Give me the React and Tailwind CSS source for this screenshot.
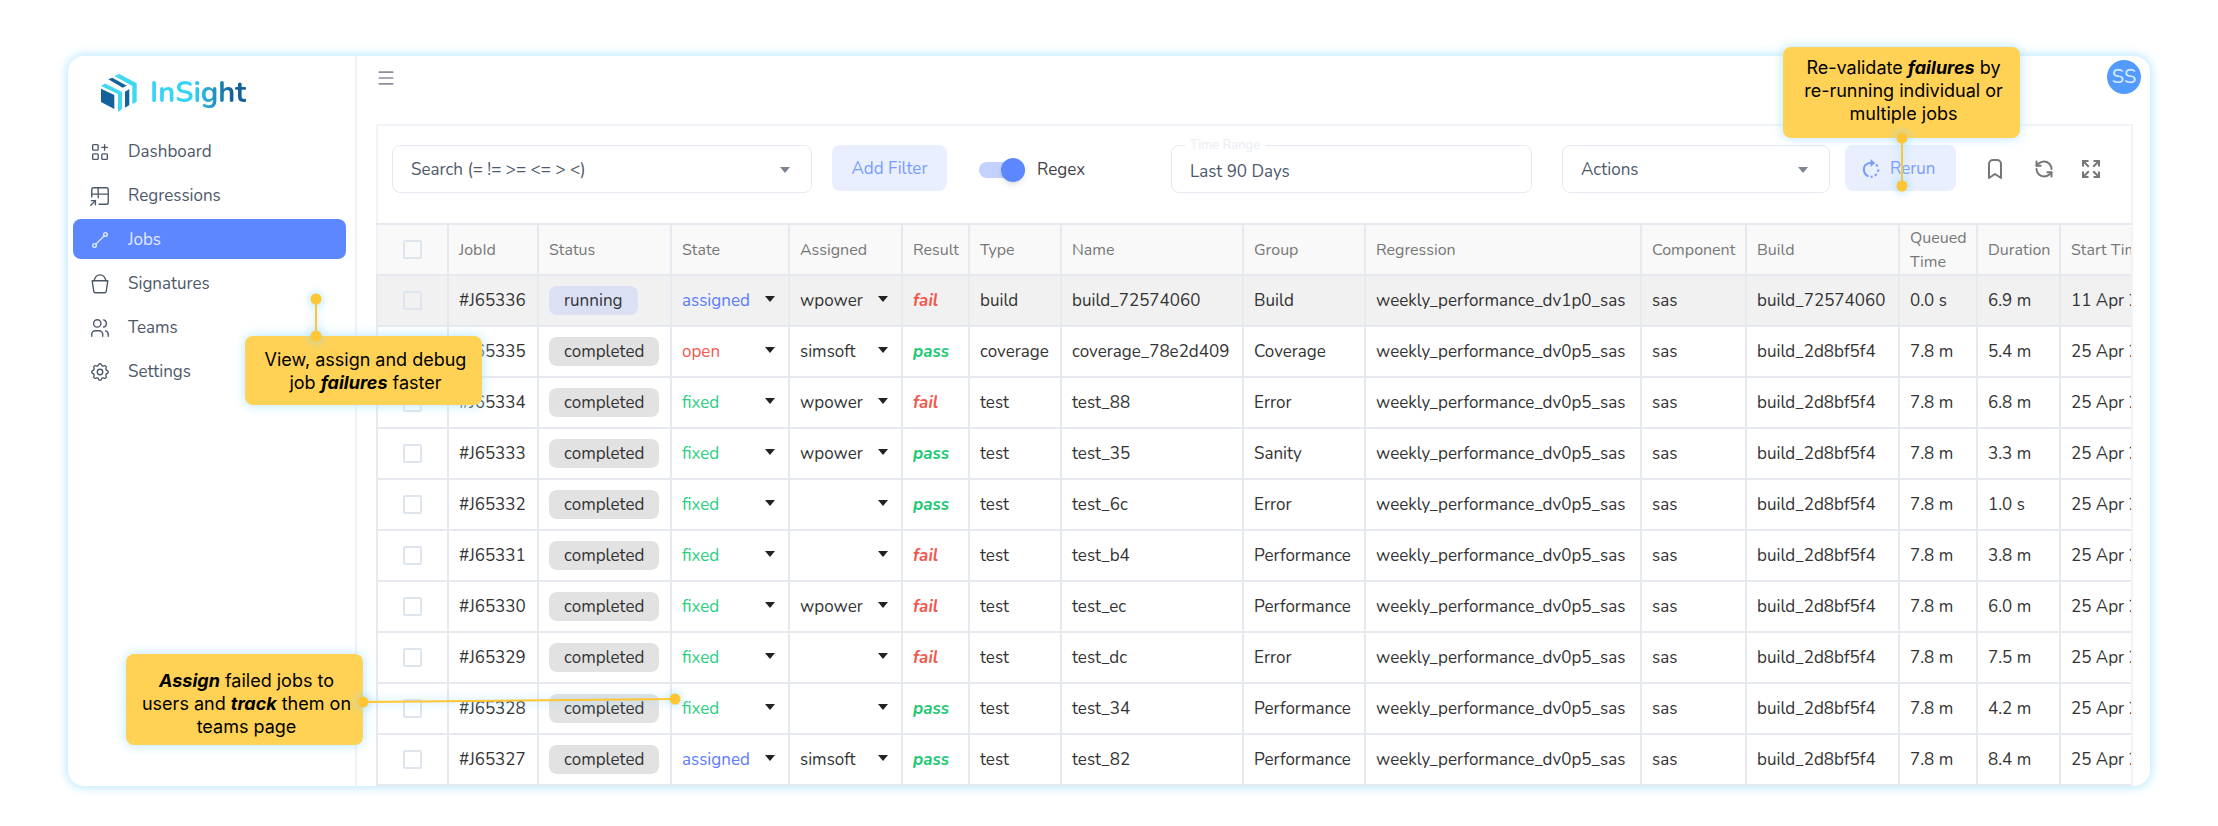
import { useState } from 'react';
import { Menu } from 'lucide-react';
import { TbApps, TbTableShortcut, TbLine, TbUsers, TbSettings, TbBookmark } from 'react-icons/tb';
import { LuRefreshCcw } from 'react-icons/lu';

const NAV = [
  { label: 'Dashboard', Icon: TbApps },
  { label: 'Regressions', Icon: TbTableShortcut },
  { label: 'Jobs', Icon: TbLine, active: true },
  { label: 'Signatures', Icon: BucketIcon },
  { label: 'Teams', Icon: TbUsers },
  { label: 'Settings', Icon: TbSettings },
];

const COLUMNS = [
  { title: 'JobId', width: 'w-[90px]' },
  { title: 'Status', width: 'w-[133px]' },
  { title: 'State', width: 'w-[118px]' },
  { title: 'Assigned', width: 'w-[113px]' },
  { title: 'Result', width: 'w-[67px]' },
  { title: 'Type', width: 'w-[92px]' },
  { title: 'Name', width: 'w-[182px]' },
  { title: 'Group', width: 'w-[122px]' },
  { title: 'Regression', width: 'w-[276px]' },
  { title: 'Component', width: 'w-[105px]' },
  { title: 'Build', width: 'w-[153px]' },
  { title: 'Queued Time', width: 'w-[78px]' },
  { title: 'Duration', width: 'w-[83px]' },
  { title: 'Start Time', width: 'w-[180px]' },
];

const JOBS = [
  ['#J65336', 'running', 'assigned', 'wpower', 'fail', 'build', 'build_72574060', 'Build', 'weekly_performance_dv1p0_sas', 'sas', 'build_72574060', '0.0 s', '6.9 m', '11 Apr 2023'],
  ['#J65335', 'completed', 'open', 'simsoft', 'pass', 'coverage', 'coverage_78e2d409', 'Coverage', 'weekly_performance_dv0p5_sas', 'sas', 'build_2d8bf5f4', '7.8 m', '5.4 m', '25 Apr 2023'],
  ['#J65334', 'completed', 'fixed', 'wpower', 'fail', 'test', 'test_88', 'Error', 'weekly_performance_dv0p5_sas', 'sas', 'build_2d8bf5f4', '7.8 m', '6.8 m', '25 Apr 2023'],
  ['#J65333', 'completed', 'fixed', 'wpower', 'pass', 'test', 'test_35', 'Sanity', 'weekly_performance_dv0p5_sas', 'sas', 'build_2d8bf5f4', '7.8 m', '3.3 m', '25 Apr 2023'],
  ['#J65332', 'completed', 'fixed', '', 'pass', 'test', 'test_6c', 'Error', 'weekly_performance_dv0p5_sas', 'sas', 'build_2d8bf5f4', '7.8 m', '1.0 s', '25 Apr 2023'],
  ['#J65331', 'completed', 'fixed', '', 'fail', 'test', 'test_b4', 'Performance', 'weekly_performance_dv0p5_sas', 'sas', 'build_2d8bf5f4', '7.8 m', '3.8 m', '25 Apr 2023'],
  ['#J65330', 'completed', 'fixed', 'wpower', 'fail', 'test', 'test_ec', 'Performance', 'weekly_performance_dv0p5_sas', 'sas', 'build_2d8bf5f4', '7.8 m', '6.0 m', '25 Apr 2023'],
  ['#J65329', 'completed', 'fixed', '', 'fail', 'test', 'test_dc', 'Error', 'weekly_performance_dv0p5_sas', 'sas', 'build_2d8bf5f4', '7.8 m', '7.5 m', '25 Apr 2023'],
  ['#J65328', 'completed', 'fixed', '', 'pass', 'test', 'test_34', 'Performance', 'weekly_performance_dv0p5_sas', 'sas', 'build_2d8bf5f4', '7.8 m', '4.2 m', '25 Apr 2023'],
  ['#J65327', 'completed', 'assigned', 'simsoft', 'pass', 'test', 'test_82', 'Performance', 'weekly_performance_dv0p5_sas', 'sas', 'build_2d8bf5f4', '7.8 m', '8.4 m', '25 Apr 2023'],
];

const STATE_COLORS = {
  assigned: 'text-[#5b7cff]',
  open: 'text-[#f4574d]',
  fixed: 'text-[#2bd07f]',
};

function BucketIcon({ className }) {
  return (
    <svg
      viewBox="0 0 24 24"
      fill="none"
      stroke="currentColor"
      strokeWidth="1.5"
      strokeLinecap="round"
      strokeLinejoin="round"
      className={className}
      aria-hidden="true"
    >
      <path d="M3.500 8.500H20.500L18.700 20.500A1.500 1.500 0 0 1 17.200 21.500H6.800A1.500 1.500 0 0 1 5.300 20.500Z" />
      <path d="M5.500 8.500C6.500 4.500 9 2 12 2S17.500 4.500 18.500 8.500" />
    </svg>
  );
}

function RerunIcon() {
  return (
    <svg width="20" height="20" viewBox="0 0 24 24" fill="none" stroke="currentColor" strokeWidth="2.4" aria-hidden="true">
      <path d="M9 20.800A8.800 8.800 0 0 1 5 7.500Q8 4.500 13 4.500" />
      <path d="M11.500 0L17 4.800L11.500 9.500Z" fill="currentColor" stroke="none" />
      <path d="M18 6.500L20 9M21 12.500L20.500 15.500M19 18L16.500 20M14 21.200H11.500" />
    </svg>
  );
}

function ExpandIcon() {
  return (
    <svg width="20" height="20" viewBox="0 0 20 20" fill="none" stroke="currentColor" strokeWidth="2" aria-hidden="true">
      <path d="M2 7.500V2H7.500M12.500 2H18V7.500M18 12.500V18H12.500M7.500 18H2V12.500" />
      <path d="M2 2L7.800 7.800M18 2L12.200 7.800M18 18L12.200 12.200M2 18L7.800 12.200" />
    </svg>
  );
}

function Caret({ className }) {
  return (
    <svg width="10" height="6" viewBox="0 0 10 6" className={className} aria-hidden="true">
      <path d="M0 0H10L5 6Z" fill="currentColor" />
    </svg>
  );
}

function Logo() {
  return (
    <div className="flex items-center gap-3 pl-8">
      <svg width="38" height="40" viewBox="0 0 38 40" aria-hidden="true">
        <path d="M1 15.700L14.300 22V36L1 29Z" fill="#14629b" />
        <path d="M1 13L5 10.500L22 19V36L18 39V21Z" fill="#3fd8ee" />
        <path d="M8.300 6.300L12.300 4.700L26.700 12.700L22.700 14.700Z" fill="#14629b" />
        <path d="M25 18.700L29.300 16V32L25 34.700Z" fill="#14629b" />
        <path d="M14.300 3L19.300 1L36.700 10.300V28.700L32.300 31V13Z" fill="#3fd8ee" />
      </svg>
      <span className="bg-linear-to-r from-[#35d3f5] from-45% to-[#14629b] to-85% bg-clip-text text-[29px] leading-9 font-bold text-transparent">
        InSight
      </span>
    </div>
  );
}

function Sidebar() {
  return (
    <aside className="w-[289px] shrink-0 border-r-2 border-[#eff2f8] pt-[17px]">
      <Logo />
      <nav className="mt-[18px] flex flex-col gap-1 pr-[9px] pl-[5px]">
        {NAV.map(({ label, Icon, active }) => (
          <a
            key={label}
            href="#"
            className={`flex h-10 items-center gap-[17px] rounded-lg pt-px pl-4 ${
              active ? 'bg-[#5d87ff] text-[#e3eaff]' : 'text-[#4d5869]'
            }`}
          >
            <Icon className="size-[22px]" strokeWidth={1.5} />
            {label}
          </a>
        ))}
      </nav>
    </aside>
  );
}

function Toolbar() {
  const [regex, setRegex] = useState(true);
  return (
    <div className="flex items-start border-x-2 border-t-2 border-[#f1f3f9] px-[14px] pt-[19px] pb-[30px] text-[#4d5869]">
      <div className="relative w-[420px]">
        <select aria-label="Search" className="h-12 w-full appearance-none rounded-lg border border-[#e5eaf2] bg-white px-[18px] pt-px">
          <option>Search (= != &gt;= &lt;= &gt; &lt;)</option>
        </select>
        <Caret className="pointer-events-none absolute top-[22px] right-[22px] text-[#7c8493]" />
      </div>
      <button className="ml-5 h-[46px] w-[115px] rounded-lg bg-[#e9efff] pt-px text-[#7a9bff]">Add Filter</button>
      <label className="ml-8 flex h-12 items-center gap-3 pt-px text-[#3f4247]">
        <span className="relative flex h-4 w-[46px] items-center rounded-full bg-[#c3d1ff]">
          <input
            type="checkbox"
            role="switch"
            checked={regex}
            onChange={() => setRegex(!regex)}
            className="absolute inset-0 appearance-none"
          />
          <span className={`size-6 rounded-full bg-[#5d87ff] shadow-md ${regex ? 'ml-auto' : ''}`} />
        </span>
        Regex
      </label>
      <div className="relative ml-auto w-[361px]">
        <input
          id="range"
          defaultValue="Last 90 Days"
          className="h-12 w-full rounded-lg border border-[#e5eaf2] px-[18px] pt-1"
        />
        <label htmlFor="range" className="absolute -top-[10px] left-[14px] bg-white px-[5px] text-[13px] leading-5 text-[#e9edf4]">
          Time Range
        </label>
      </div>
      <div className="relative ml-[30px] w-[268px]">
        <select aria-label="Actions" className="h-12 w-full appearance-none rounded-lg border border-[#e5eaf2] bg-white px-[18px] pt-px">
          <option>Actions</option>
        </select>
        <Caret className="pointer-events-none absolute top-[22px] right-[22px] text-[#7c8493]" />
      </div>
      <button className="ml-[15px] flex h-[46px] w-[111px] items-center gap-[9px] rounded-lg bg-[#e9efff] pt-px pl-4 text-[#7a9bff]">
        <RerunIcon />
        Rerun
      </button>
      <div className="ml-[27px] flex h-12 items-center gap-[27px] pr-4 text-[#777]">
        <button aria-label="Bookmark"><TbBookmark className="size-6" /></button>
        <button aria-label="Refresh"><LuRefreshCcw className="size-5" strokeWidth={2.4} /></button>
        <button aria-label="Full screen"><ExpandIcon /></button>
      </div>
    </div>
  );
}

function RowCheckbox({ label }) {
  return (
    <input
      type="checkbox"
      aria-label={label}
      className="block size-[19px] appearance-none rounded-xs border-2 border-[#dfe5ef]"
    />
  );
}

function CellValue({ column, value }) {
  switch (column) {
    case 'Status':
      return (
        <span
          className={`inline-block rounded-lg px-[15px] py-[3px] leading-[23px] ${
            value === 'running' ? 'bg-[#dce0f5]' : 'bg-[#e2e2e2]'
          }`}
        >
          {value}
        </span>
      );
    case 'State':
    case 'Assigned':
      return (
        <div className={`flex items-center justify-between pr-[13px] ${STATE_COLORS[value] || ''}`}>
          <span>{value}</span>
          <Caret className="mb-1 text-[#222]" />
        </div>
      );
    case 'Result':
      return (
        <span className={`font-bold italic ${value === 'fail' ? 'text-[#f4574d]' : 'text-[#20c873]'}`}>{value}</span>
      );
    default:
      return value;
  }
}

function JobsTable() {
  return (
    <div className="overflow-hidden border-r-2 border-[#f1f3f9]">
      <table className="w-[1863px] table-fixed border-collapse text-left whitespace-nowrap">
        <colgroup>
          <col className="w-[71px]" />
          {COLUMNS.map((c) => (
            <col key={c.title} className={c.width} />
          ))}
        </colgroup>
        <thead>
          <tr className="h-[51px] bg-[#f9f9f9] text-base text-[#777]">
            <th className="border-2 border-[#e6eaf0] border-l-[#eff2f8] pl-[25px]">
              <RowCheckbox label="Select all jobs" />
            </th>
            {COLUMNS.map((c) => (
              <th key={c.title} className="border-2 border-[#e6eaf0] pl-[10px] leading-6 font-normal whitespace-normal">
                {c.title}
              </th>
            ))}
          </tr>
        </thead>
        <tbody>
          {JOBS.map((job, i) => (
            <tr key={job[0]} className={`h-[51px] text-[#333] ${i === 0 ? 'bg-[#f1f1f1]' : ''}`}>
              <td className="border-2 border-[#e6eaf0] pl-[25px]">
                <RowCheckbox label={`Select ${job[0]}`} />
              </td>
              {COLUMNS.map((c, n) => (
                <td key={c.title} className="border-2 border-[#e6eaf0] pl-[10px]">
                  <CellValue column={c.title} value={job[n]} />
                </td>
              ))}
            </tr>
          ))}
        </tbody>
      </table>
    </div>
  );
}

function Callout({ className, children }) {
  return (
    <div
      className={`absolute flex w-[237px] justify-center rounded-lg bg-[#ffd255] text-center font-[Inter,sans-serif] text-lg leading-[23px] whitespace-nowrap text-black shadow-[0_0_12px_#b3e6ff] ${className}`}
    >
      <p>{children}</p>
    </div>
  );
}

function Connector({ className, x, y }) {
  const w = Math.abs(x) + 12;
  const h = Math.abs(y) + 12;
  const y1 = y < 0 ? h - 6 : 6;
  return (
    <svg
      width={w}
      height={h}
      className={`pointer-events-none absolute overflow-visible drop-shadow-[0_0_5px_#8fd8ff] ${className}`}
      aria-hidden="true"
    >
      <g fill="#ffc533" stroke="#ffc533" strokeWidth="2">
        <line x1="6" y1={y1} x2={6 + x} y2={y1 + y} />
        <circle cx="6" cy={y1} r="4.500" />
        <circle cx={6 + x} cy={y1 + y} r="4.500" />
      </g>
    </svg>
  );
}

export default function App() {
  return (
    <div className="relative bg-white px-[68px] pt-14 pb-10 font-[Nunito,'Noto_Sans',sans-serif] text-[17px]">
      <div className="flex overflow-hidden rounded-2xl shadow-[0_0_10px_2px_#bfeaff]">
        <Sidebar />
        <main className="min-w-0 flex-1 pr-[17px] pl-[19px]">
          <header className="flex h-[68px] items-start justify-between pt-1">
            <button aria-label="Toggle menu" className="mt-2 text-[#8b8f99]">
              <Menu className="size-5" />
            </button>
            <span className="-mr-2 flex size-[34px] items-center justify-center rounded-full bg-[#539bff] text-xl text-[#dcebff]">
              SS
            </span>
          </header>
          <section>
            <Toolbar />
            <JobsTable />
          </section>
        </main>
      </div>

      <Callout className="top-[336px] left-[245px] h-[69px] pt-3 pl-1">
        View, assign and debug
        <br />
        job <b><i>failures</i></b> faster
      </Callout>
      <Connector className="top-[293px] left-[310px]" x={0} y={37} />

      <Callout className="top-[47px] right-[198px] h-[91px] pt-[9px] pl-1">
        Re-validate <b><i>failures</i></b> by
        <br />
        re-running individual or
        <br />
        multiple jobs
      </Callout>
      <Connector className="top-[132px] right-[310px]" x={0} y={48} />

      <Callout className="top-[654px] left-[126px] h-[91px] pt-[15px] pl-1">
        <b><i>Assign</i></b> failed jobs to
        <br />
        users and <b><i>track</i></b> them on
        <br />
        teams page
      </Callout>
      <Connector className="top-[693px] left-[357px]" x={312} y={-3} />
    </div>
  );
}
